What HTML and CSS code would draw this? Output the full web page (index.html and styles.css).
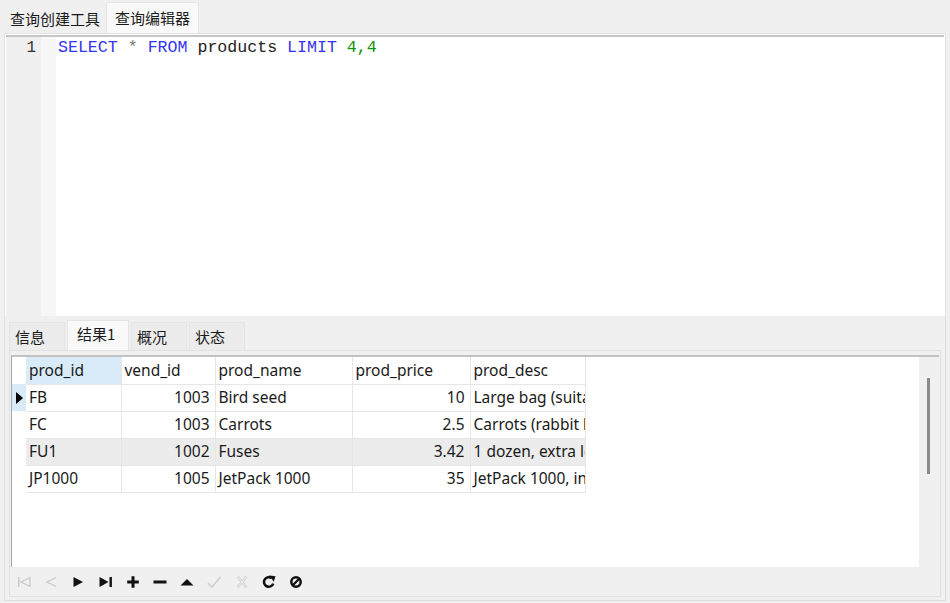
FILE: index.html
```html
<!DOCTYPE html>
<html>
<head>
<meta charset="utf-8">
<link rel="stylesheet" href="styles.css">
</head>
<body>
<div class="app">
  <div class="tabs top-tabs">
    <div class="tab">查询创建工具</div>
    <div class="tab active">查询编辑器</div>
  </div>
  <div class="editor">
    <div class="editor-inner">
      <div class="gutter"><div class="ln">1</div></div>
      <div class="fold"></div>
      <div class="code"><span class="kw">SELECT</span> <span class="op">*</span> <span class="kw">FROM</span> products <span class="kw">LIMIT</span> <span class="num">4,4</span></div>
    </div>
  </div>
  <div class="results">
    <div class="tabs res-tabs">
      <div class="tab">信息</div>
      <div class="tab active">结果1</div>
      <div class="tab">概况</div>
      <div class="tab">状态</div>
    </div>
    <div class="grid-frame">
      <div class="grid-wrap">
        <div class="grid-area">
          <table class="grid">
            <colgroup>
              <col class="c-ind"><col class="c-id"><col class="c-vend"><col class="c-name"><col class="c-price"><col class="c-desc">
            </colgroup>
            <thead>
              <tr><th class="ind"></th><th class="sel">prod_id</th><th>vend_id</th><th>prod_name</th><th>prod_price</th><th>prod_desc</th></tr>
            </thead>
            <tbody>
              <tr><td class="ind cur"><span class="arrow"></span></td><td>FB</td><td class="r">1003</td><td>Bird seed</td><td class="r">10</td><td>Large bag (suitable for any bird)</td></tr>
              <tr><td class="ind"></td><td>FC</td><td class="r">1003</td><td>Carrots</td><td class="r">2.5</td><td>Carrots (rabbit hunting season only)</td></tr>
              <tr class="hl"><td class="ind"></td><td>FU1</td><td class="r">1002</td><td>Fuses</td><td class="r">3.42</td><td>1 dozen, extra long</td></tr>
              <tr><td class="ind"></td><td>JP1000</td><td class="r">1005</td><td>JetPack 1000</td><td class="r">35</td><td>JetPack 1000, intended for single use</td></tr>
            </tbody>
          </table>
        </div>
        <div class="vscroll"><div class="thumb"></div></div>
      </div>
      <div class="toolbar">
        <svg class="ic" viewBox="0 0 16 16"><rect x="2" y="3" width="1.5" height="10" fill="#c9c9c9"/><path d="M14 3.5 L5 8 L14 12.5 Z" fill="none" stroke="#c9c9c9" stroke-width="1.3"/></svg>
        <svg class="ic" viewBox="0 0 16 16"><path d="M13 3.5 L4 8 L13 12.5" fill="none" stroke="#c9c9c9" stroke-width="1.3"/></svg>
        <svg class="ic" viewBox="0 0 16 16"><path d="M3.5 3 L13 8 L3.5 13 Z" fill="#111"/></svg>
        <svg class="ic" viewBox="0 0 16 16"><path d="M1.5 3 L10.5 8 L1.5 13 Z" fill="#111"/><rect x="11.5" y="3" width="2.4" height="10" fill="#111"/></svg>
        <svg class="ic" viewBox="0 0 16 16"><path d="M6.5 2.2 h3 v4.3 h4.3 v3 h-4.3 v4.3 h-3 v-4.3 h-4.3 v-3 h4.3 Z" fill="#111"/></svg>
        <svg class="ic" viewBox="0 0 16 16"><rect x="1.5" y="6.5" width="13" height="3" fill="#111"/></svg>
        <svg class="ic" viewBox="0 0 16 16"><path d="M1.5 11.5 L8 5 L14.5 11.5 Z" fill="#111"/></svg>
        <svg class="ic" viewBox="0 0 16 16"><path d="M2 9 L6 13 L14.5 3" fill="none" stroke="#cfcfcf" stroke-width="1.6"/></svg>
        <svg class="ic" viewBox="0 0 16 16"><path d="M3.5 2.5 L12.5 13.5 M12.5 2.5 L3.5 13.5" fill="none" stroke="#cfcfcf" stroke-width="2.6"/><path d="M3.5 2.5 L12.5 13.5 M12.5 2.5 L3.5 13.5" fill="none" stroke="#f6f6f6" stroke-width="0.9"/></svg>
        <svg class="ic" viewBox="0 0 16 16"><path d="M12.3 9.6 A4.8 4.8 0 1 1 10.8 4.2" fill="none" stroke="#111" stroke-width="2.6"/><path d="M8.4 1.5 L14.5 2.3 L12.8 7.8 Z" fill="#111"/></svg>
        <svg class="ic" viewBox="0 0 16 16"><circle cx="8" cy="8" r="4.7" fill="none" stroke="#111" stroke-width="2.5"/><path d="M5 11 L11 5" stroke="#111" stroke-width="2.3"/></svg>
      </div>
    </div>
  </div>
</div>
</body>
</html>
```

FILE: styles.css
```css
* { box-sizing: border-box; }
html, body { margin: 0; padding: 0; }
body {
  background: #f0f0f0;
  font-family: "Noto Sans", "Noto Sans CJK SC", sans-serif;
  color: #1a1a1a;
  width: 950px;
  height: 603px;
  overflow: hidden;
}
.app { display: flex; flex-direction: column; height: 603px; }

.tabs { display: flex; align-items: flex-end; }
.tab {
  font-family: "Noto Sans CJK SC", sans-serif;
  font-size: 15px;
  line-height: 20px;
  color: #1a1a1a;
  margin-right: 2px;
}
.top-tabs { height: 33px; padding-left: 4px; }
.top-tabs .tab { height: 27px; padding: 3px 6px 0; }
.top-tabs .tab.active {
  height: 31px;
  padding-top: 5px;
  background: #f9f9f9;
  border: 1px solid #e6e6e6;
  border-bottom: none;
  padding-left: 8px;
  padding-right: 8px;
  margin-left: -2px;
}

.editor {
  margin: 0 4px 0 4px;
  height: 283px;
  border: 1px solid #e2e2e2;
  border-bottom: none;
  background: #fff;
  padding: 1px 1px 0 1px;
}
.editor-inner {
  display: flex;
  height: 100%;
  border-top: 2px solid #c6c6c6;
}
.gutter { width: 35px; background: #f0f0f0; }
.ln {
  font-family: "Liberation Mono", monospace;
  font-size: 16px;
  line-height: 20px;
  text-align: right;
  padding: 1px 5px 0 0;
  color: #333;
}
.fold {
  width: 15px;
  background-color: #f7f7f7;
  background-image: radial-gradient(#ececec 0.6px, transparent 0.7px);
  background-size: 2px 2px;
}
.code {
  font-family: "Liberation Mono", monospace;
  font-size: 16.6px;
  line-height: 20px;
  padding: 1px 0 0 2px;
  color: #222;
  white-space: pre;
}
.kw { color: #3434f0; }
.op { color: #777; }
.num { color: #14910f; }

.results {
  margin: 0 4px 2px 4px;
  flex: 1;
  border: 1px solid #dedede;
  border-top: none;
  display: flex;
  flex-direction: column;
  padding: 0 4px 3px 4px;
}
.res-tabs { height: 34px; padding-top: 4px; }
.res-tabs .tab {
  height: 28px;
  padding: 4px 0 0 5px;
  width: 56px;
  background: #ececec;
  border: 1px solid #e4e4e4;
  border-bottom: none;
}
.res-tabs .tab.active {
  height: 30px;
  width: 62px;
  padding: 3px 0 0 9px;
  background: #f9f9f9;
}

.grid-frame {
  flex: 1;
  border: 1px solid #e2e2e2;
  display: flex;
  flex-direction: column;
  padding: 4px 1px 0 1px;
}
.grid-wrap {
  display: flex;
  height: 212px;
  flex: none;
  border-top: 2px solid #c2c2c2;
  border-left: 1px solid #a8a8a8;
  background: #fff;
}
.grid-area { flex: 1; overflow: hidden; }
.vscroll {
  width: 20px;
  background: #f0f0f0;
  padding: 21px 0 0 8px;
}
.thumb { width: 3px; height: 96px; background: #8a8a8a; }

.grid {
  border-collapse: collapse;
  table-layout: fixed;
  width: 573px;
  font-size: 15.5px;
}
.c-ind { width: 14px; }
.c-id { width: 95px; }
.c-vend { width: 94px; }
.c-name { width: 137px; }
.c-price { width: 118px; }
.c-desc { width: 115px; }
.grid th, .grid td {
  height: 27px;
  padding: 0 5px 0 3px;
  border-right: 1px solid #e6e6e6;
  border-bottom: 1px solid #e6e6e6;
  font-weight: normal;
  text-align: left;
  white-space: nowrap;
  overflow: hidden;
  text-overflow: clip;
  line-height: 25px;
  color: #1a1a1a;
}
.grid th.sel { background: #d9eaf8; }
.grid .ind { padding: 0; border-right: none; border-bottom: none; }
.grid td.cur { background: #d9eaf8; }
.arrow {
  display: block;
  margin-left: 4px;
  width: 0; height: 0;
  border-top: 6px solid transparent;
  border-bottom: 6px solid transparent;
  border-left: 7px solid #000;
}
.grid .r { text-align: right; }
.grid tr.hl td { background: #ececec; }
.grid tr.hl td.ind { background: #fff; }

.toolbar {
  flex: 1;
  display: flex;
  align-items: center;
  padding-left: 5px;
  gap: 11.2px;
}
.ic { width: 16px; height: 16px; }
```
